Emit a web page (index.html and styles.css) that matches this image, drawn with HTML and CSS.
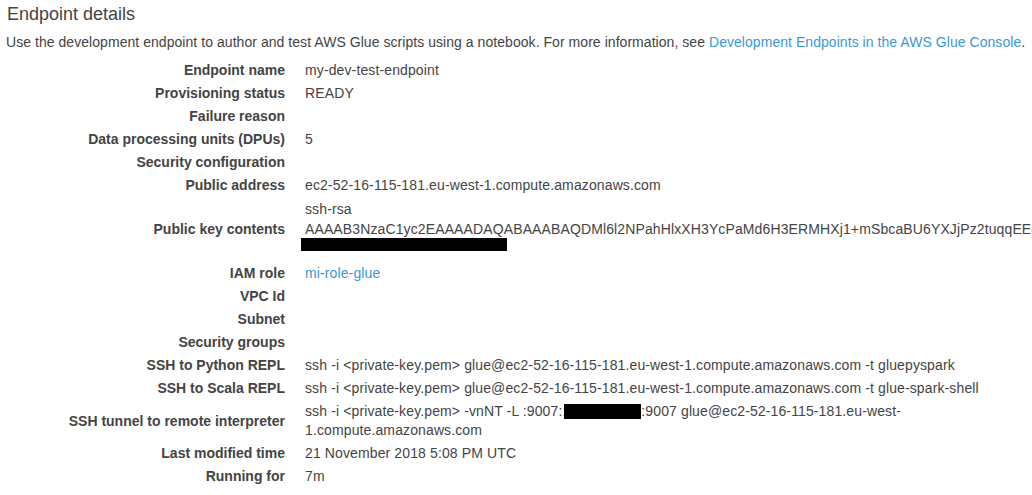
FILE: index.html
```html
<!DOCTYPE html>
<html>
<head>
<meta charset="utf-8">
<link rel="stylesheet" href="styles.css">
</head>
<body>
<div class="page">
  <h2 class="title">Endpoint details</h2>
  <p class="intro">Use the development endpoint to author and test AWS Glue scripts using a notebook. For more information, see <a class="link" href="#">Development Endpoints in the AWS Glue Console</a>.</p>
  <div class="details">
    <div class="label">Endpoint name</div><div class="value">my-dev-test-endpoint</div>
    <div class="label">Provisioning status</div><div class="value">READY</div>
    <div class="label">Failure reason</div><div class="value"></div>
    <div class="label">Data processing units (DPUs)</div><div class="value">5</div>
    <div class="label">Security configuration</div><div class="value"></div>
    <div class="label">Public address</div><div class="value">ec2-52-16-115-181.eu-west-1.compute.amazonaws.com</div>
    <div class="label">Public key contents</div>
    <div class="value key">
      <div class="keyline">ssh-rsa</div>
      <div class="keyline">AAAAB3NzaC1yc2EAAAADAQABAAABAQDMl6l2NPahHlxXH3YcPaMd6H3ERMHXj1+mSbcaBU6YXJjPz2tuqqEEqrvKp8dLmWnQ</div>
      <div class="keyline"><span class="redact keyredact"></span></div>
    </div>
    <div class="label">IAM role</div><div class="value"><a class="link" href="#">mi-role-glue</a></div>
    <div class="label">VPC Id</div><div class="value"></div>
    <div class="label">Subnet</div><div class="value"></div>
    <div class="label">Security groups</div><div class="value"></div>
    <div class="label">SSH to Python REPL</div><div class="value">ssh -i &lt;private-key.pem&gt; glue@ec2-52-16-115-181.eu-west-1.compute.amazonaws.com -t gluepyspark</div>
    <div class="label">SSH to Scala REPL</div><div class="value">ssh -i &lt;private-key.pem&gt; glue@ec2-52-16-115-181.eu-west-1.compute.amazonaws.com -t glue-spark-shell</div>
    <div class="label">SSH tunnel to remote interpreter</div>
    <div class="value tunnel">ssh -i &lt;private-key.pem&gt; -vnNT -L :9007:1<span class="redact ipredact"></span>:9007 glue@ec2-52-16-115-181.eu-west-1.compute.amazonaws.com</div>
    <div class="label">Last modified time</div><div class="value">21 November 2018 5:08 PM UTC</div>
    <div class="label">Running for</div><div class="value">7m</div>
  </div>
</div>
</body>
</html>
```

FILE: styles.css
```css
html, body {
  margin: 0;
  padding: 0;
  background: #ffffff;
}

body {
  font-family: "Liberation Sans", Arial, Helvetica, sans-serif;
  color: #444444;
  overflow: hidden;
}

.page {
  padding: 3px 6px 0 6px;
}

.title {
  margin: 0 0 0 1px;
  font-size: 18px;
  font-weight: normal;
  line-height: 22px;
  color: #444444;
}

.intro {
  margin: 8px 0 8px 0;
  font-size: 14px;
  line-height: 18px;
  color: #444444;
  white-space: nowrap;
  letter-spacing: 0.05px;
}

.link {
  color: #3c98d6;
  text-decoration: none;
}

.details {
  display: grid;
  grid-template-columns: 279px 1fr;
  column-gap: 20px;
  font-size: 14px;
}

.label {
  font-weight: bold;
  text-align: right;
  color: #444444;
  padding: 3px 0;
  line-height: 17px;
  display: flex;
  align-items: center;
  justify-content: flex-end;
  white-space: nowrap;
}

.value {
  padding: 3px 0;
  line-height: 17px;
  min-height: 17px;
  color: #444444;
  white-space: nowrap;
  min-width: 0;
  overflow: hidden;
  letter-spacing: 0.12px;
}

.value.key {
  padding: 2px 0 3px 0;
  overflow: visible;
}

.keyline {
  line-height: 20px;
  height: 20px;
  white-space: nowrap;
}

.tunnel {
  white-space: normal;
  width: 610px;
  line-height: 19px;
  padding: 2px 0;
}

.redact {
  display: inline-block;
  background: #000000;
}

.keyredact {
  width: 206px;
  height: 13px;
  margin-top: -1px;
  margin-left: -4px;
  vertical-align: top;
}

.ipredact {
  width: 77px;
  height: 15px;
  margin-left: -6px;
  vertical-align: -3px;
}
```
